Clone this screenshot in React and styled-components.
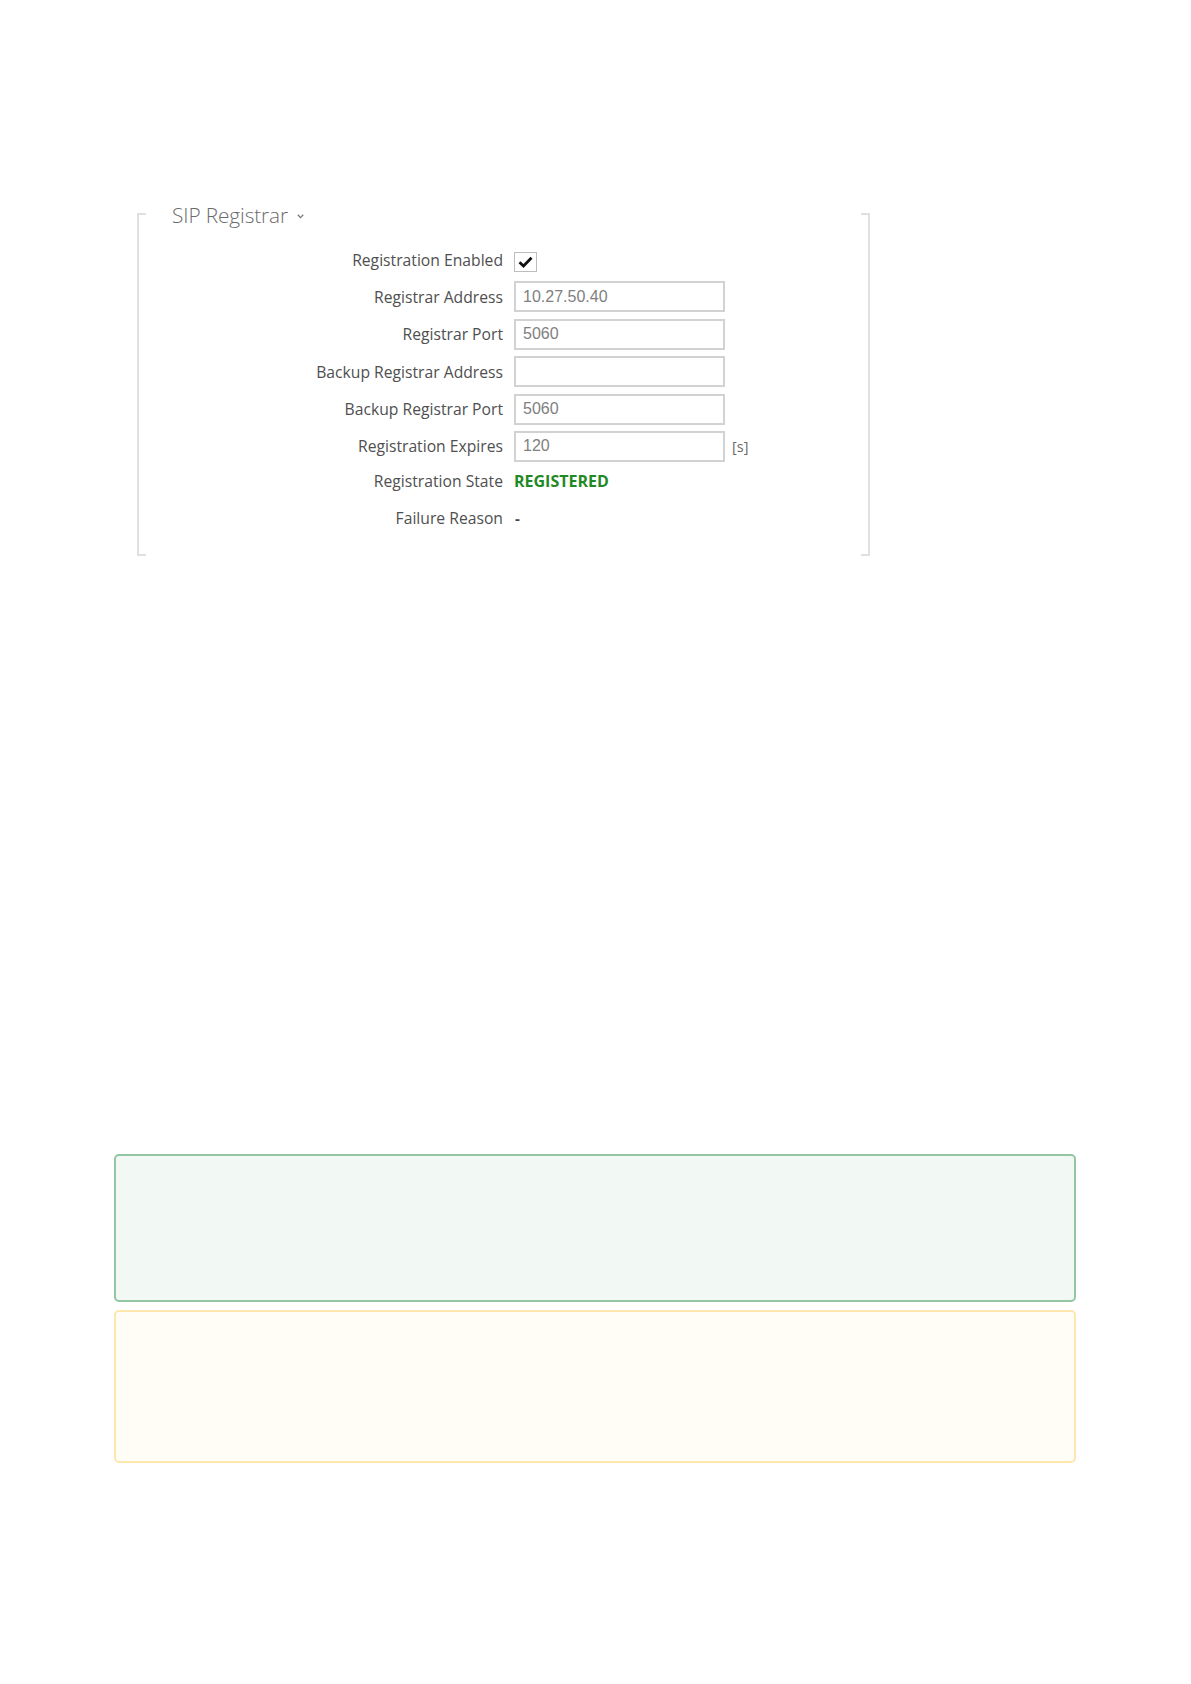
import React from 'react'
import styled, { createGlobalStyle } from 'styled-components'

const GlobalStyle = createGlobalStyle`
    html, body {
        margin: 0;
        padding: 0;
        background: #ffffff;
    }
    body {
        font-family: "Open Sans", "Liberation Sans", sans-serif;
    }
`

const Page = styled.main`
    width: 1191px;
    min-height: 1684px;
    padding-top: 213px;
    box-sizing: border-box;
`

const Bracket = styled.section`
    display: flow-root;
    margin-left: 137px;
    width: 733px;
    box-sizing: border-box;
    border-left: 2px solid #e0e0e0;
    border-right: 2px solid #e0e0e0;
    padding: 0 0 26px 0;
    background-image:
        linear-gradient(#e0e0e0, #e0e0e0),
        linear-gradient(#e0e0e0, #e0e0e0),
        linear-gradient(#e0e0e0, #e0e0e0),
        linear-gradient(#e0e0e0, #e0e0e0);
    background-size: 7px 2px;
    background-repeat: no-repeat;
    background-position: left top, right top, left bottom, right bottom;
`

const Title = styled.h2`
    margin: -11px 0 0 33px;
    display: flex;
    align-items: center;
    gap: 9px;
    height: 26px;
    font-family: "Open Sans", "Liberation Sans", sans-serif;
    font-weight: 300;
    font-size: 20.8px;
    color: #6b6b6b;
    letter-spacing: -0.1px;
`

const Chevron = () => (
    <svg width="7" height="5" viewBox="0 0 7 5" style={{ marginTop: 3 }}>
        <path d="M0.8 0.8 L3.5 3.6 L6.2 0.8" fill="none" stroke="#777" strokeWidth="1.3" />
    </svg>
)

const Rows = styled.div`
    margin-top: 16.5px;
    display: flex;
    flex-direction: column;
    gap: 7.4px;
`

const Row = styled.div`
    display: flex;
    align-items: center;
    height: ${p => p.$h || 30}px;
    margin-top: ${p => p.$mt || 0}px;
`

const Label = styled.label`
    width: 364px;
    flex: none;
    text-align: right;
    padding-right: 11px;
    box-sizing: content-box;
    font-size: 15.7px;
    color: #4f4f4f;
    white-space: nowrap;
`

const Input = styled.input`
    width: 211px;
    height: 31px;
    box-sizing: border-box;
    border: 2px solid #d2d2d2;
    padding: 0 7px;
    font-family: "Liberation Sans", Arial, sans-serif;
    font-size: 16px;
    color: #808080;
    background: #fff;
    outline: none;
`

const Unit = styled.span`
    margin-left: 7px;
    font-size: 14.5px;
    color: #6a6a6a;
`

const CheckBox = styled.span`
    width: 23px;
    height: 20px;
    margin-top: 4px;
    box-sizing: border-box;
    border: 1.5px solid #bdbdbd;
    display: flex;
    align-items: center;
    justify-content: center;
`

const State = styled.span`
    font-weight: 700;
    font-size: 16px;
    color: #1f8a24;
`

const Dash = styled.span`
    font-size: 15px;
    font-weight: 700;
    color: #444;
    padding-left: 1px;
`

const Notes = styled.div`
    margin: 598px 0 0 114px;
    width: 962px;
    display: flex;
    flex-direction: column;
    gap: 8px;
`

const Note = styled.div`
    box-sizing: border-box;
    height: ${p => p.$h}px;
    border-radius: 5px;
    border: 2px solid ${p => (p.$kind === 'tip' ? '#93c6a2' : '#fde7ad')};
    background: ${p => (p.$kind === 'tip' ? '#f2f8f4' : '#fffdf6')};
`

const fields = [
    { label: 'Registrar Address', value: '10.27.50.40' },
    { label: 'Registrar Port', value: '5060' },
    { label: 'Backup Registrar Address', value: '' },
    { label: 'Backup Registrar Port', value: '5060' },
    { label: 'Registration Expires', value: '120', unit: '[s]' },
]

const App = () => {
    return (
        <Page>
            <GlobalStyle />
            <Bracket>
                <Title>
                    SIP Registrar <Chevron />
                </Title>
                <Rows>
                    <Row>
                        <Label>Registration Enabled</Label>
                        <CheckBox>
                            <svg width="15" height="12" viewBox="0 0 15 12">
                                <path d="M1.5 6.2 L5.5 10 L13.5 1.8" fill="none" stroke="#111" strokeWidth="2.8" />
                            </svg>
                        </CheckBox>
                    </Row>
                    {fields.map(f => (
                        <Row key={f.label}>
                            <Label>{f.label}</Label>
                            <Input defaultValue={f.value} readOnly />
                            {f.unit && <Unit>{f.unit}</Unit>}
                        </Row>
                    ))}
                    <Row $h={24}>
                        <Label>Registration State</Label>
                        <State>REGISTERED</State>
                    </Row>
                    <Row $h={24} $mt={6}>
                        <Label>Failure Reason</Label>
                        <Dash>-</Dash>
                    </Row>
                </Rows>
            </Bracket>
            <Notes>
                <Note $kind="tip" $h={148} />
                <Note $kind="warn" $h={153} />
            </Notes>
        </Page>
    )
}

export default App
